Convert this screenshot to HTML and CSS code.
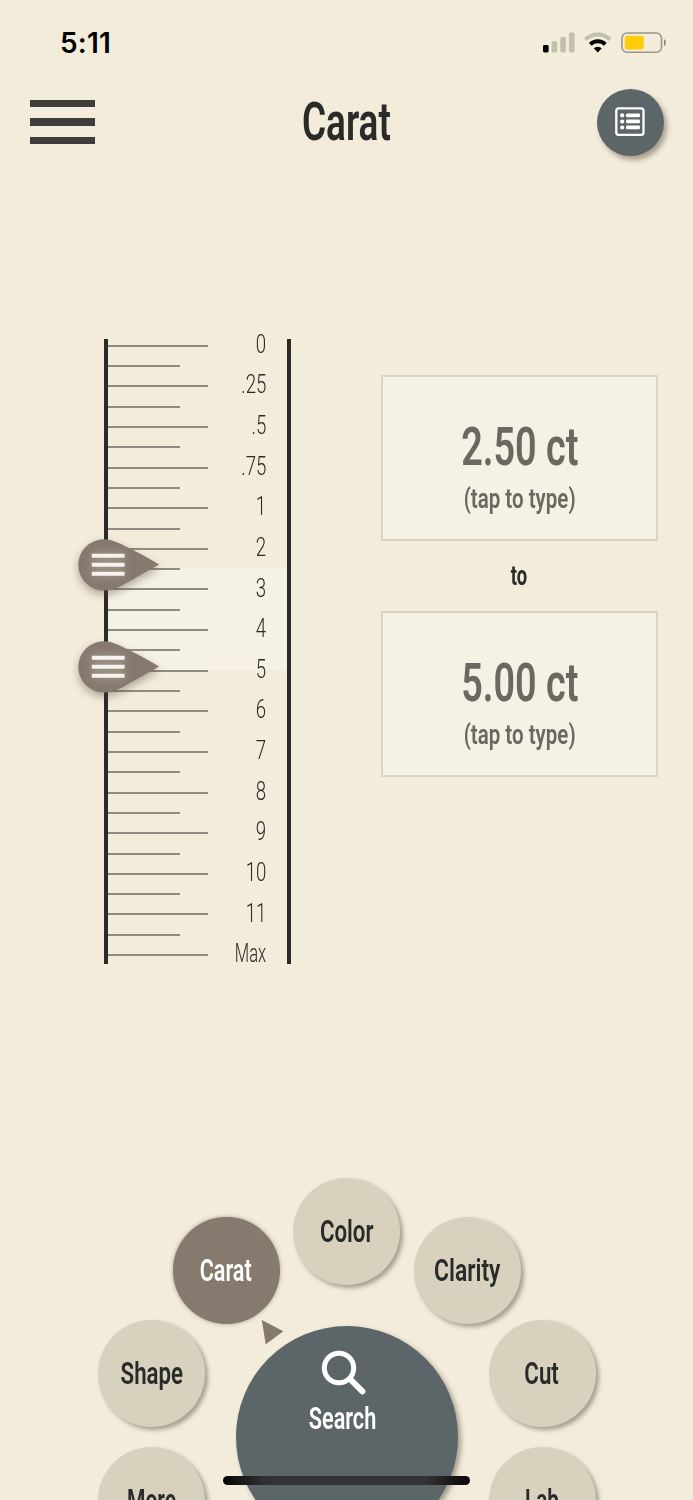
FILE: index.html
```html
<!DOCTYPE html>
<html lang="en">
<head>
    <meta charset="UTF-8">
    <meta name="viewport" content="width=device-width, initial-scale=1.0">
    <title>Carat</title>
    <link rel="stylesheet" href="styles.css">
</head>
<body>
    <div class="screen">
        <div class="status-bar">
            <span class="time">5:11</span>
            <svg class="status-icons" width="126" height="24" viewBox="541 30 126 24">
                <rect x="543" y="45" width="5.6" height="7.4" rx="1.4" fill="#000"/>
                <g fill="#c4bead">
                    <rect x="551.6" y="41.3" width="5.6" height="11.1" rx="1.4"/>
                    <rect x="560.3" y="37" width="5.6" height="15.4" rx="1.4"/>
                    <rect x="569" y="32.6" width="5.6" height="19.8" rx="1.4"/>
                </g>
                <path d="M585.4 39.6 A17.6 17.6 0 0 1 610.2 39.6" fill="none" stroke="#c4bead" stroke-width="4"/>
                <path d="M590.3 44.4 A10.8 10.8 0 0 1 605.3 44.4" fill="none" stroke="#000" stroke-width="4"/>
                <path d="M593.8 48.3 A5.7 5.7 0 0 1 601.8 48.3 L597.8 52.4 Z" fill="#000"/>
                <rect x="621.9" y="33" width="39.6" height="19.3" rx="5.2" fill="none" stroke="#9b9588" stroke-width="1.6"/>
                <rect x="624.8" y="35.8" width="19" height="13.6" rx="2.4" fill="#ffcc0a"/>
                <path d="M664 39 Q666 40.2 666 42.6 Q666 45 664 46.2 Z" fill="#8f897c"/>
            </svg>
        </div>

        <header class="header">
            <div class="menu">
                <i></i>
                <i></i>
                <i></i>
            </div>
            <h1><span>Carat</span></h1>
            <div class="list-btn">
                <svg width="30" height="30" viewBox="0 0 30 30">
                    <rect x="1.3" y="1.3" width="27.2" height="26.6" rx="2.4" fill="none" stroke="#fff" stroke-width="2.3"/>
                    <g fill="#fff">
                        <circle cx="7.2" cy="8.4" r="2.1"/>
                        <circle cx="7.2" cy="14.5" r="2.1"/>
                        <circle cx="7.2" cy="20.5" r="2.1"/>
                        <rect x="11" y="6.6" width="14" height="3.7" rx="1.2"/>
                        <rect x="11" y="12.6" width="14" height="3.7" rx="1.2"/>
                        <rect x="11" y="18.6" width="14" height="3.7" rx="1.2"/>
                    </g>
                </svg>
            </div>
        </header>

        <main class="main">
            <div class="ruler">
                <div class="range"></div>
                <ul class="marks">
                    <li><span>0</span></li>
                    <li><span>.25</span></li>
                    <li><span>.5</span></li>
                    <li><span>.75</span></li>
                    <li><span>1</span></li>
                    <li><span>2</span></li>
                    <li><span>3</span></li>
                    <li><span>4</span></li>
                    <li><span>5</span></li>
                    <li><span>6</span></li>
                    <li><span>7</span></li>
                    <li><span>8</span></li>
                    <li><span>9</span></li>
                    <li><span>10</span></li>
                    <li><span>11</span></li>
                    <li><span class="max">Max</span></li>
                </ul>
                <svg class="handle handle-min" width="84" height="54" viewBox="0 0 84 54">
                    <path class="drop" d="M27 1.2 A25.7 25.7 0 1 0 27 52.6 Q35 52.6 45 47.6 Q64 37 82.2 26.6 Q64 15.6 45 6.6 Q34 1.2 27 1.2 Z"/>
                    <path class="grip" d="M14.8 17.8 H47.6 M14.8 26.8 H47.6 M14.8 35.8 H47.6"/>
                </svg>
                <svg class="handle handle-max" width="84" height="54" viewBox="0 0 84 54">
                    <path class="drop" d="M27 1.2 A25.7 25.7 0 1 0 27 52.6 Q35 52.6 45 47.6 Q64 37 82.2 26.6 Q64 15.6 45 6.6 Q34 1.2 27 1.2 Z"/>
                    <path class="grip" d="M14.8 17.8 H47.6 M14.8 26.8 H47.6 M14.8 35.8 H47.6"/>
                </svg>
            </div>

            <div class="values">
                <div class="value-box">
                    <span class="amount">2.50 ct</span>
                    <span class="hint">(tap to type)</span>
                </div>
                <div class="to"><span>to</span></div>
                <div class="value-box">
                    <span class="amount">5.00 ct</span>
                    <span class="hint">(tap to type)</span>
                </div>
            </div>
        </main>

        <!-- radial menu -->
        <nav class="wheel">
            <div class="item more"><span>More</span></div>
            <div class="item shape"><span>Shape</span></div>
            <div class="item carat active"><span>Carat</span></div>
            <div class="item color"><span>Color</span></div>
            <div class="item clarity"><span>Clarity</span></div>
            <div class="item cut"><span>Cut</span></div>
            <div class="item lab"><span>Lab</span></div>
            <svg class="pointer" width="24" height="26" viewBox="0 0 24 26">
                <path d="M1.8 0 L23.4 11.2 L5.7 24.2 Z" fill="#857a6d"/>
            </svg>
            <div class="search">
                <svg width="48" height="48" viewBox="0 0 48 48" fill="none" stroke="#fff">
                    <circle cx="19" cy="19" r="14.7" stroke-width="5"/>
                    <path d="M30 30 L42.4 42.4" stroke-width="6" stroke-linecap="round"/>
                </svg>
                <span>Search</span>
            </div>
        </nav>
        <div class="home-bar"></div>
    </div>
</body>
</html>
```
FILE: styles.css
```css
* {
    box-sizing: border-box;
}
body {
    margin: 0;
    background-color: #f3ecda;
    color: #292a2a;
    font-family: Roboto, "Liberation Sans", sans-serif;
}
.screen {
    position: relative;
    width: 693px;
    height: 1500px;
    overflow: hidden;
}
/* condensed lettering */
h1 span, .marks span, .amount, .hint, .to span, .item span, .search span {
    display: inline-block;
    white-space: nowrap;
    transform: scaleX(0.73);
}

.status-bar {
    display: flex;
    justify-content: space-between;
    align-items: center;
    height: 84px;
    padding: 0 26px 0 60px;
}
.time {
    padding-top: 1px;
    font-family: Inter, sans-serif;
    font-size: 28px;
    font-weight: 600;
    letter-spacing: 0.2px;
    color: #000;
}

.header {
    display: flex;
    justify-content: space-between;
    align-items: center;
    height: 76px;
    padding: 0 29.5px;
}
.menu {
    display: flex;
    flex-direction: column;
    gap: 11px;
    width: 67px;
    padding-right: 2px;
}
.menu i {
    height: 7.6px;
    background-color: #3e3d3b;
}
h1 {
    margin: 0;
    font-size: 53.5px;
    font-weight: 600;
    line-height: 76px;
}
h1 span {
    transform: scaleX(0.69);
}
.list-btn {
    display: flex;
    justify-content: center;
    align-items: center;
    width: 67px;
    height: 67px;
    border-radius: 50%;
    background-color: #5c6668;
    box-shadow: 3px 4px 5px rgba(80, 65, 50, 0.45);
}

.main {
    display: flex;
    align-items: flex-start;
    padding: 179px 35px 0 104px;
}
.ruler {
    position: relative;
    width: 187px;
    height: 625px;
    border-left: 4px solid #292a2a;
    border-right: 4px solid #292a2a;
}
.range {
    position: absolute;
    top: 229px;
    left: 0;
    right: 0;
    height: 102px;
    background-color: #f5f1e4;
}
.marks {
    position: relative;
    list-style: none;
    margin: -14px 0 0;
    padding: 0;
}
.marks li {
    position: relative;
    display: flex;
    justify-content: flex-end;
    align-items: center;
    height: 40.63px;
    padding: 0 20.5px 3px 0;
    font-size: 25.5px;
    font-weight: 350;
}
.marks span {
    transform-origin: right center;
}
.marks .max {
    transform: scaleX(0.65);
}
.marks li::before, .marks li::after {
    content: "";
    position: absolute;
    left: 0;
    height: 2px;
    background-color: #918c81;
}
.marks li::before {
    top: 19.7px;
    width: 100px;
}
.marks li::after {
    top: 40px;
    width: 72px;
}
.marks li:last-child::after {
    display: none;
}
.handle {
    position: absolute;
    left: -31.5px;
    overflow: visible;
    filter: drop-shadow(0 4px 4px rgba(70, 60, 50, 0.4));
}
.handle-min {
    top: 199px;
}
.handle-max {
    top: 300.5px;
}
.drop {
    fill: #857a6d;
}
.grip {
    stroke: #f7f3f0;
    stroke-width: 4;
    filter: drop-shadow(0 0 4px rgba(220, 215, 205, 0.5));
}

.values {
    flex: 1;
    margin: 35.5px 0 0 90px;
}
.value-box {
    display: flex;
    flex-direction: column;
    align-items: center;
    height: 166px;
    padding-top: 39px;
    border: 2px solid #d8d5c8;
    background-color: #f5f1e4;
    color: #6b6761;
}
.amount {
    font-size: 54px;
    font-weight: 600;
    line-height: 62px;
    transform: scaleX(0.7);
}
.hint {
    font-size: 27px;
    font-weight: 600;
    line-height: 42px;
    transform: scaleX(0.76);
}
.to {
    height: 70.5px;
    text-align: center;
    font-size: 27px;
    font-weight: 700;
    line-height: 70px;
}
.to span {
    transform: scaleX(0.68);
}

.item {
    position: absolute;
    display: flex;
    justify-content: center;
    align-items: center;
    width: 107px;
    height: 107px;
    border-radius: 50%;
    background-color: #d8d1be;
    box-shadow: 3px 3px 4px rgba(90, 85, 70, 0.5);
    font-size: 30.5px;
    font-weight: 600;
}
.active {
    background-color: #857a6d;
    box-shadow: 0 0 4px rgba(90, 85, 70, 0.5);
    color: #fff;
}
.more {
    left: 98px;
    top: 1447px;
}
.more span {
    transform: scaleX(0.69);
}
.shape {
    left: 98px;
    top: 1320px;
}
.carat {
    left: 172.5px;
    top: 1217px;
}
.carat span {
    transform: scaleX(0.71);
}
.color {
    left: 293px;
    top: 1178px;
}
.clarity {
    left: 414px;
    top: 1217px;
}
.clarity span {
    transform: scaleX(0.75);
}
.cut {
    left: 488.5px;
    top: 1320px;
}
.lab {
    left: 488.5px;
    top: 1447px;
}
.lab span {
    transform: scaleX(0.68);
}
.pointer {
    position: absolute;
    left: 260px;
    top: 1320px;
}
.search {
    position: absolute;
    left: 236px;
    top: 1326px;
    display: flex;
    flex-direction: column;
    align-items: center;
    width: 222px;
    height: 222px;
    padding: 22px 8px 0 0;
    border-radius: 50%;
    background-color: #5c6668;
    box-shadow: 3px 3px 5px rgba(90, 75, 60, 0.5);
    color: #fff;
    font-size: 30.5px;
    font-weight: 600;
}
.search svg {
    position: relative;
    left: 1px;
    top: 1px;
}
.search span {
    line-height: 46px;
    transform: scaleX(0.71);
}
.home-bar {
    position: absolute;
    left: 223px;
    top: 1475.5px;
    width: 247px;
    height: 9px;
    border-radius: 5px;
    background: linear-gradient(to right, #060606, #333 18%, #333 82%, #060606);
}
```
